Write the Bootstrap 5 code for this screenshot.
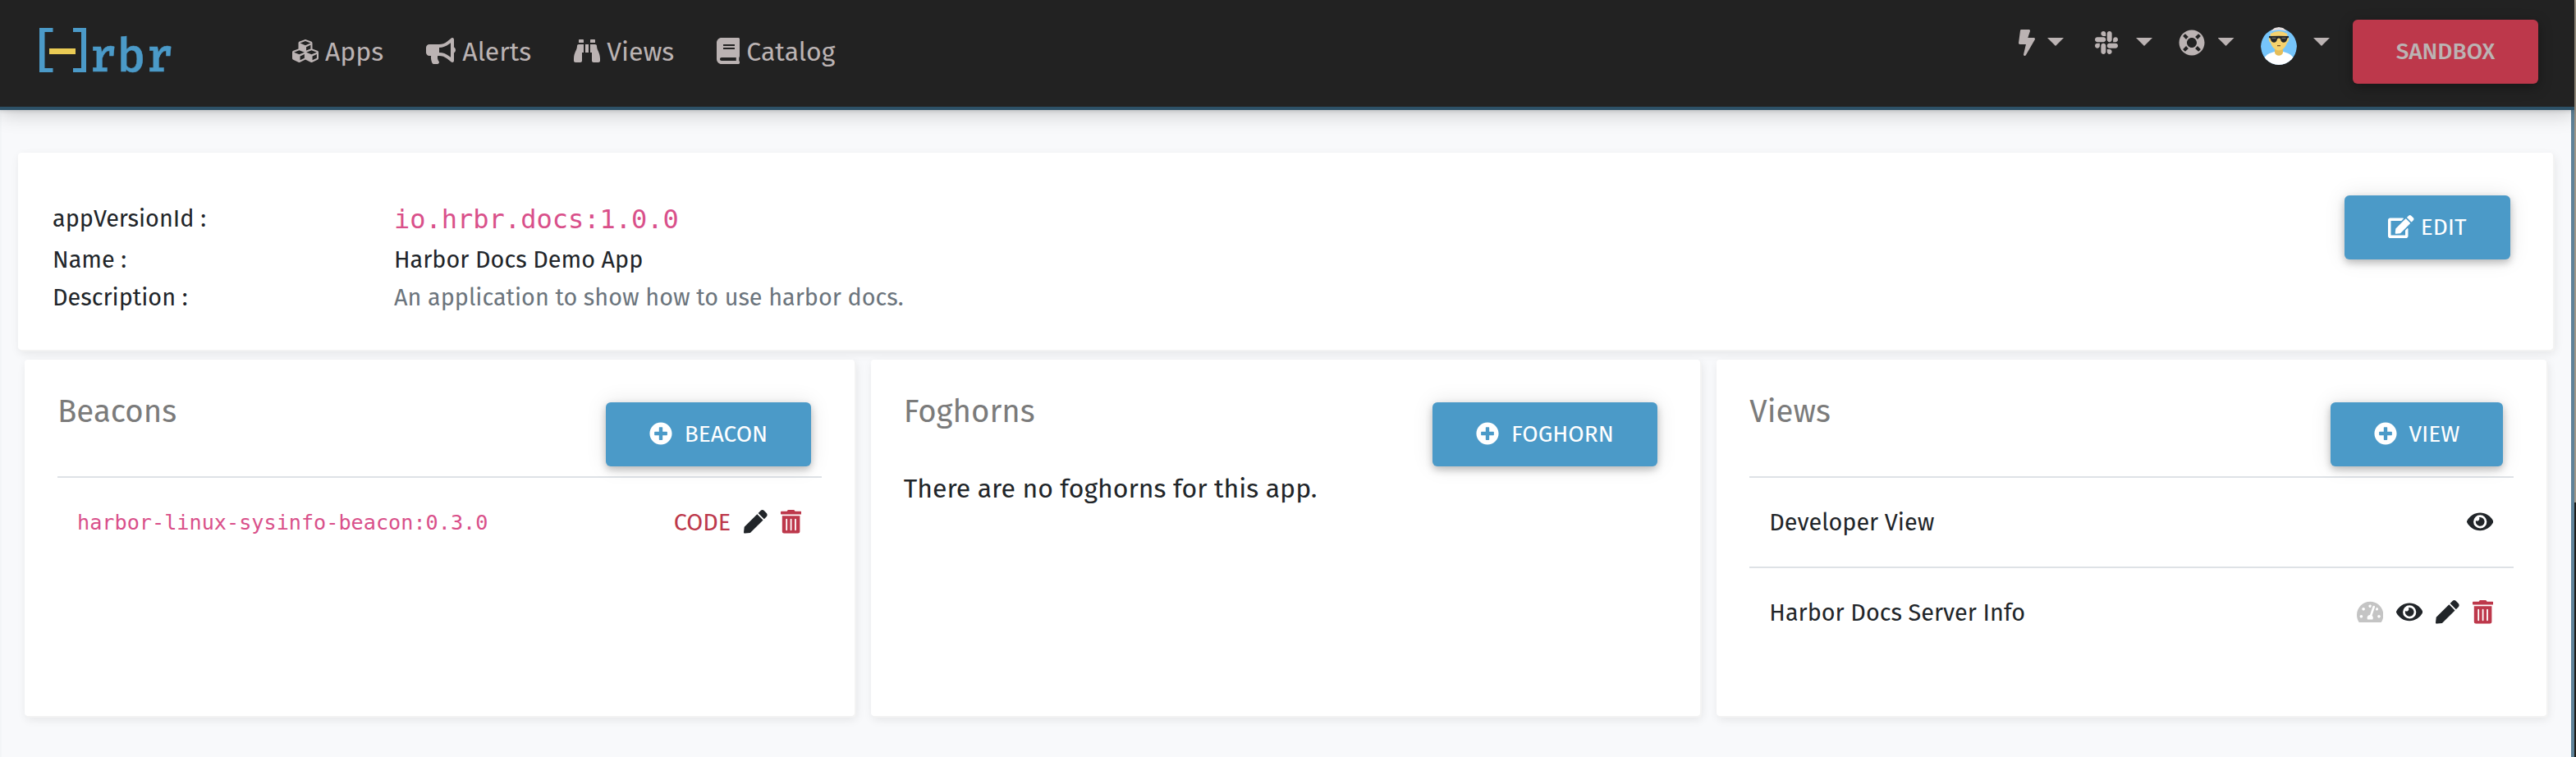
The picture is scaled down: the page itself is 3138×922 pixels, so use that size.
<!DOCTYPE html>
<html lang="en">
<head>
<meta charset="utf-8">
<title>Harbor Docs Demo App</title>
<link href="https://cdn.jsdelivr.net/npm/bootstrap@5.3.0/dist/css/bootstrap.min.css" rel="stylesheet">
<style>
  html { background: linear-gradient(#a09788 0, #a09788 612px, #1d1c18 612px) no-repeat; }
  body { background: transparent; font-family: "Fira Sans", "Noto Sans", "Liberation Sans", sans-serif; font-size: 28.8px; color: #212529; overflow: hidden; }
  svg { display: block; flex: none; fill: currentColor; }
  .shell { width: calc(100% - 2px); height: 922px; background: #f8f9fb; }
  .topbar { height: 134px; background: #222; border-bottom: 4px solid #2d5167; box-shadow: 0 4px 24px rgba(0,0,0,.2), 0 2px 4px rgba(0,0,0,.1); position: relative; z-index: 2; color: #bbb3b3; }
  .brand-logo { margin: 24px 0 0 40px; }
  .brand-logo text { font: 500 57.5px "Fira Mono", "Liberation Mono", monospace; fill: #4b9ac8; stroke: #4b9ac8; stroke-width: .5; }
  .menu { margin: 39px 0 0 126px; gap: 52px; font-size: 32px; line-height: 48px; }
  .menu a { color: inherit; text-decoration: none; display: flex; gap: 8px; }
  .menu svg { height: 32px; margin-top: 7px; }
  .tools svg { margin-top: 36px; }
  .tools .avatar { margin-top: 33px; }
  .drop { width: 20px; height: 10px; margin-top: 46px; background: #bbb3b3; clip-path: polygon(0 0, 100% 0, 50% 100%); }
  .big-btn { --bs-btn-border-width: 0; height: 78px; padding: 0 53.5px; font-size: 28px; line-height: 78px; color: #fff; background: #4b9ac8; border-radius: 6px; display: flex; align-items: center; box-shadow: 0 4px 10px rgba(0,0,0,.24), 0 0 26px rgba(0,0,0,.1); white-space: nowrap; }
  .big-btn svg { height: 28px; margin-top: -3px; }
  .big-btn.sandbox { width: 226px; padding: 0; justify-content: center; background: #bd384b; color: #bbb3b3; font-weight: 500; margin: 24px 44px 0 28px; box-shadow: 0 4px 16px rgba(0,0,0,.35); }
  .page { height: 788px; border-right: 4px solid #5f8399; border-left: 2px solid #f3f5f7; padding: 52px 22px 0 20px; }
  .panel { background: #fff; border-radius: 4px; box-shadow: 2px 2px 0 #f3f3f3, 2px 4px 12px rgba(0,0,0,.09); }
  .summary { height: 240px; padding: 58px 52px 0 42px; line-height: 46px; }
  .summary dl { display: grid; grid-template-columns: 416px auto; grid-template-rows: 50px 46px 46px; }
  .summary dt, .summary dd { font-weight: 400; margin: 0; }
  .summary .big-btn { margin-top: -6px; }
  .appid, .pkg { font-family: "DejaVu Sans Mono", monospace; color: #d9508a; }
  .appid { font-size: 32px; }
  .pkg { font-size: 25.2px; }
  .desc { color: #6c757d; }
  .columns { --bs-gutter-x: 20px; margin: 12px -2px 0; }
  .columns > .col-4 > .panel { height: 434px; padding: 40px 40px 0; }
  .head { height: 93px; }
  .head h2 { font-size: 38.4px; line-height: 46px; font-weight: 400; color: #7b7b7b; margin: 0; }
  .head .big-btn { margin: 12px 12.5px 0 0; padding: 0 53px; gap: 15px; }
  .empty { font-size: 32px; line-height: 48px; }
  .rows { margin-top: 9px; }
  .rows > div { height: 110px; border-top: 2px solid #dee2e6; padding: 2px 24.5px 0 24px; gap: 16px; }
  .rows svg { height: 28.8px; margin-top: -3px; }
  .red { color: #bd384b; }
  .faded { color: #c4c4c4; }
</style>
</head>
<body>
<svg width="0" height="0" style="position:absolute">
  <symbol id="plus" viewBox="0 0 512 512"><path d="M256 8C119 8 8 119 8 256s111 248 248 248 248-111 248-248S393 8 256 8zm144 276c0 6.6-5.4 12-12 12h-92v92c0 6.6-5.4 12-12 12h-56c-6.6 0-12-5.4-12-12v-92h-92c-6.6 0-12-5.4-12-12v-56c0-6.6 5.4-12 12-12h92v-92c0-6.6 5.4-12 12-12h56c6.6 0 12 5.4 12 12v92h92c6.6 0 12 5.4 12 12v56z"/></symbol>
  <symbol id="eye" viewBox="0 0 576 512"><path d="M572.52 241.4C518.29 135.59 410.93 64 288 64S57.68 135.64 3.48 241.41a32.35 32.35 0 0 0 0 29.19C57.71 376.41 165.07 448 288 448s230.32-71.64 284.52-177.41a32.35 32.35 0 0 0 0-29.19zM288 400a144 144 0 1 1 144-144 143.93 143.93 0 0 1-144 144zm0-240a95.31 95.31 0 0 0-25.31 3.79 47.85 47.85 0 0 1-66.9 66.9A95.78 95.78 0 1 0 288 160z"/></symbol>
  <symbol id="pen" viewBox="0 0 512 512"><path d="M290.74 93.24l128.02 128.02-277.99 277.99-114.14 12.6C11.35 513.54-1.56 500.62.14 485.34l12.7-114.22 277.9-277.88zm207.2-19.06l-60.11-60.11c-18.75-18.75-49.16-18.75-67.91 0l-56.55 56.55 128.02 128.02 56.55-56.55c18.75-18.76 18.75-49.16 0-67.91z"/></symbol>
  <symbol id="trash" viewBox="0 0 448 512"><path d="M32 464a48 48 0 0 0 48 48h288a48 48 0 0 0 48-48V128H32zm272-256a16 16 0 0 1 32 0v224a16 16 0 0 1-32 0zm-96 0a16 16 0 0 1 32 0v224a16 16 0 0 1-32 0zm-96 0a16 16 0 0 1 32 0v224a16 16 0 0 1-32 0zM432 32H312l-9.4-18.7A24 24 0 0 0 281.1 0H166.8a23.72 23.72 0 0 0-21.4 13.3L136 32H16A16 16 0 0 0 0 48v32a16 16 0 0 0 16 16h416a16 16 0 0 0 16-16V48a16 16 0 0 0-16-16z"/></symbol>
</svg>
<div class="shell">
  <nav class="topbar d-flex align-items-start">
    <svg class="brand-logo" width="190" height="90" viewBox="0 0 190 90">
      <path d="M8 10H24.500V15H14.500V59H24.500V64H8zM49 10H65V64H49V59H59V15H49z" fill="#4b9ac8"/>
      <rect x="20" y="35" width="32" height="7" fill="#eacb54"/>
      <text x="68" y="63">rbr</text>
    </svg>
    <div class="menu d-flex">
      <a href="#"><svg viewBox="0 0 512 512" width="32"><path d="M488.600 250.200L392 214V105.500c0-15-9.300-28.400-23.400-33.700l-100-37.500c-8.100-3.100-17.100-3.100-25.300 0l-100 37.500c-14.100 5.300-23.400 18.700-23.400 33.700V214l-96.600 36.200C9.300 255.500 0 268.900 0 283.900V394c0 13.600 7.700 26.100 19.900 32.200l100 50c10.100 5.100 22.100 5.100 32.200 0l103.900-52 103.900 52c10.100 5.100 22.100 5.100 32.200 0l100-50c12.200-6.100 19.900-18.600 19.900-32.200V283.900c0-15-9.300-28.400-23.400-33.700zM358 214.800l-85 31.900v-68.200l85-37v73.300zM154 104.100l102-38.200 102 38.200v.6l-102 41.400-102-41.400v-.6zm84 291.100l-85 42.500v-79.100l85-38.800v75.400zm0-112l-102 41.400-102-41.400v-.6l102-38.200 102 38.200v.6zm240 112l-85 42.500v-79.100l85-38.800v75.400zm0-112l-102 41.400-102-41.400v-.6l102-38.200 102 38.200v.6z"/></svg>Apps</a>
      <a href="#"><svg viewBox="0 0 576 512" width="36"><path d="M576 240c0-23.630-12.950-44.040-32-55.120V32.010C544 23.260 537.020 0 512 0c-7.120 0-14.190 2.380-19.980 7.020l-85.030 68.030C364.280 109.190 310.660 128 256 128H64c-35.350 0-64 28.650-64 64v96c0 35.350 28.650 64 64 64h33.700c-1.390 10.480-2.180 21.140-2.180 32 0 39.770 9.260 77.350 25.560 110.940 5.190 10.690 16.520 17.060 28.400 17.060h74.280c26.050 0 41.690-29.840 25.900-50.560-16.400-21.520-26.150-48.360-26.150-77.440 0-11.110 1.620-21.790 4.410-32H256c54.660 0 108.280 18.810 150.980 52.950l85.030 68.030a32.023 32.023 0 0 0 19.980 7.020c24.920 0 32-22.780 32-32V295.130C563.050 284.040 576 263.630 576 240zm-96 141.420l-33.050-26.440C392.950 311.780 325.120 288 256 288v-96c69.120 0 136.950-23.780 190.950-66.980L480 98.580v282.840z"/></svg>Alerts</a>
      <a href="#"><svg viewBox="0 0 512 512" width="32"><path d="M416 48c0-8.840-7.160-16-16-16h-64c-8.840 0-16 7.160-16 16v48h96V48zM63.910 159.990C61.400 253.840 3.460 274.220 0 404v44c0 17.670 14.330 32 32 32h96c17.670 0 32-14.330 32-32V288h32V128H95.840c-17.630 0-31.450 14.370-31.930 31.990zm384.180 0c-.48-17.620-14.300-31.990-31.930-31.990H320v160h32v160c0 17.670 14.330 32 32 32h96c17.670 0 32-14.330 32-32v-44c-3.460-129.780-61.400-150.160-63.910-244.010zM176 32h-64c-8.840 0-16 7.160-16 16v48h96V48c0-8.840-7.160-16-16-16zm48 256h64V128h-64v160z"/></svg>Views</a>
      <a href="#"><svg viewBox="0 0 448 512" width="28"><path d="M448 360V24c0-13.300-10.700-24-24-24H96C43 0 0 43 0 96v320c0 53 43 96 96 96h328c13.300 0 24-10.700 24-24v-16c0-7.500-3.500-14.300-8.900-18.700-4.200-15.400-4.200-59.300 0-74.700 5.400-4.300 8.900-11.100 8.900-18.600zM128 134c0-3.300 2.700-6 6-6h212c3.300 0 6 2.700 6 6v20c0 3.300-2.700 6-6 6H134c-3.300 0-6-2.700-6-6v-20zm0 64c0-3.300 2.700-6 6-6h212c3.300 0 6 2.700 6 6v20c0 3.300-2.700 6-6 6H134c-3.300 0-6-2.700-6-6v-20zm253.400 250H96c-17.700 0-32-14.300-32-32 0-17.600 14.400-32 32-32h285.400c-1.900 17.100-1.900 46.900 0 64z"/></svg>Catalog</a>
    </div>
    <div class="tools d-flex align-items-start ms-auto">
      <svg viewBox="0 0 320 512" width="20" height="32"><path d="M296 160H180.600l42.600-129.800C227.200 15 215.700 0 200 0H56C44 0 33.800 8.900 32.200 20.800l-32 240C-1.700 275.200 9.500 288 24 288h118.700L96.600 482.500c-3.600 15.200 8 29.500 23.300 29.500 8.400 0 16.400-4.400 20.800-12l176-304c9.300-15.900-2.200-36-20.700-36z"/></svg>
      <span class="drop" style="margin-left:15px"></span>
      <svg style="margin-left:38px" viewBox="0 0 448 512" width="28" height="32"><path d="M94.120 315.100c0 25.900-21.160 47.060-47.060 47.060S0 341 0 315.100c0-25.900 21.160-47.060 47.060-47.060h47.060v47.060zm23.720 0c0-25.900 21.160-47.060 47.060-47.060s47.060 21.160 47.060 47.060v117.840c0 25.900-21.160 47.060-47.060 47.060s-47.060-21.160-47.060-47.060V315.100zm47.060-188.980c-25.900 0-47.060-21.160-47.060-47.060S139 32 164.900 32s47.060 21.160 47.060 47.060v47.060H164.900zm0 23.720c25.900 0 47.060 21.160 47.060 47.060s-21.160 47.060-47.060 47.060H47.060C21.160 243.960 0 222.800 0 196.900s21.160-47.060 47.060-47.060H164.900zm188.980 47.060c0-25.900 21.160-47.060 47.060-47.060 25.900 0 47.060 21.160 47.060 47.060s-21.160 47.060-47.060 47.060h-47.060V196.900zm-23.720 0c0 25.900-21.160 47.060-47.060 47.060-25.900 0-47.060-21.160-47.060-47.060V79.060c0-25.900 21.160-47.060 47.060-47.060 25.900 0 47.060 21.160 47.060 47.060V196.900zM283.100 385.880c25.900 0 47.060 21.160 47.060 47.060 0 25.900-21.160 47.060-47.060 47.060-25.900 0-47.060-21.160-47.060-47.060v-47.060h47.060zm0-23.720c-25.900 0-47.060-21.160-47.060-47.060 0-25.900 21.160-47.060 47.060-47.060h117.840c25.900 0 47.060 21.160 47.060 47.060 0 25.900-21.160 47.060-47.060 47.060H283.100z"/></svg>
      <span class="drop" style="margin-left:22px"></span>
      <svg style="margin-left:31.500px" viewBox="0 0 512 512" width="32" height="32"><path d="M256 8C119.033 8 8 119.033 8 256s111.033 248 248 248 248-111.033 248-248S392.967 8 256 8zm173.696 119.559l-63.399 63.399c-10.987-18.559-26.670-34.252-45.255-45.255l63.399-63.399a218.396 218.396 0 0 1 45.255 45.255zM256 352c-53.019 0-96-42.981-96-96s42.981-96 96-96 96 42.981 96 96-42.981 96-96 96zM127.559 82.304l63.399 63.399c-18.559 10.987-34.252 26.670-45.255 45.255l-63.399-63.399a218.372 218.372 0 0 1 45.255-45.255zM82.304 384.441l63.399-63.399c10.987 18.559 26.670 34.252 45.255 45.255l-63.399 63.399a218.396 218.396 0 0 1-45.255-45.255zm302.137 45.255l-63.399-63.399c18.559-10.987 34.252-26.670 45.255-45.255l63.399 63.399a218.403 218.403 0 0 1-45.255 45.255z"/></svg>
      <span class="drop" style="margin-left:16px"></span>
      <svg class="avatar" style="margin-left:32.500px" width="44" height="46" viewBox="0 0 44 46">
        <clipPath id="face"><ellipse cx="22" cy="23" rx="22" ry="23"/></clipPath>
        <g clip-path="url(#face)">
          <ellipse cx="22" cy="24" rx="22" ry="22.500" fill="#76c5fa"/>
          <path d="M3 46V41C4 34 12 31 17 30H27C32 31 40 34 41 41V46z" fill="#fff"/>
          <path d="M17 25H27V31C26 36 18 36 17 31z" fill="#e6bd58"/>
          <path d="M12 8Q22 2 32 8L32.500 12Q35 12 34 16Q33.500 19 32 19C31 24 26 28.500 22 28.500S13 24 12 19Q10.500 19 10 16Q9 12 11.500 12z" fill="#f5d26e"/>
          <path d="M11 10C12 3 17 0 22 0S32 3 33 10L31 5Q22 2 13 5z" fill="#e4dddd"/>
          <path d="M10 11Q22 10.500 34 11V13Q32 13 32 15C31 20 24.500 20 24 14.500Q22 12.500 20 14.500C19.500 20 13 20 12 15Q12 13 10 13z" fill="#23262a"/>
          <path d="M13.500 13.500H18.500M25.500 13.500H30.500" stroke="#6e6b55" stroke-width="1.500"/>
          <path d="M20 22.700H24" stroke="#6b4a22" stroke-width="1.300"/>
        </g>
      </svg>
      <span class="drop" style="margin-left:20px"></span>
      <button class="btn big-btn sandbox">SANDBOX</button>
    </div>
  </nav>
  <main class="page">
    <section class="panel summary d-flex align-items-start justify-content-between">
      <dl class="mb-0">
        <dt>appVersionId :</dt><dd class="appid">io.hrbr.docs:1.0.0</dd>
        <dt>Name :</dt><dd>Harbor Docs Demo App</dd>
        <dt>Description :</dt><dd class="desc">An application to show how to use harbor docs.</dd>
      </dl>
      <button class="btn big-btn"><svg class="me-2" viewBox="0 0 576 512" width="31.500"><path d="M402.600 83.200l90.200 90.200c3.800 3.800 3.800 10 0 13.800L274.400 405.600l-92.800 10.300c-12.400 1.400-22.900-9.100-21.500-21.500l10.300-92.800L388.800 83.200c3.800-3.800 10-3.800 13.800 0zm162-22.900l-48.800-48.800c-15.200-15.200-39.900-15.200-55.200 0l-35.400 35.400c-3.800 3.800-3.800 10 0 13.800l90.200 90.200c3.800 3.800 10 3.800 13.800 0l35.400-35.400c15.200-15.300 15.200-40 0-55.200zM384 346.200V448H64V128h229.800c3.200 0 6.200-1.300 8.500-3.500l40-40c7.600-7.600 2.200-20.500-8.500-20.500H48C21.500 64 0 85.500 0 112v352c0 26.500 21.500 48 48 48h352c26.500 0 48-21.500 48-48V306.200c0-10.700-12.900-16-20.500-8.500l-40 40c-2.200 2.300-3.500 5.300-3.500 8.500z"/></svg>EDIT</button>
    </section>
    <div class="row columns">
      <div class="col-4">
        <section class="panel">
          <div class="head d-flex justify-content-between align-items-start"><h2>Beacons</h2><button class="btn big-btn"><svg width="28"><use href="#plus"/></svg>BEACON</button></div>
          <div class="rows">
            <div class="d-flex align-items-center"><span class="pkg me-auto">harbor-linux-sysinfo-beacon:0.3.0</span><span class="red">CODE</span><svg width="28.800"><use href="#pen"/></svg><svg class="red" width="25.200"><use href="#trash"/></svg></div>
          </div>
        </section>
      </div>
      <div class="col-4">
        <section class="panel">
          <div class="head d-flex justify-content-between align-items-start"><h2>Foghorns</h2><button class="btn big-btn"><svg width="28"><use href="#plus"/></svg>FOGHORN</button></div>
          <div class="empty">There are no foghorns for this app.</div>
        </section>
      </div>
      <div class="col-4">
        <section class="panel">
          <div class="head d-flex justify-content-between align-items-start"><h2>Views</h2><button class="btn big-btn"><svg width="28"><use href="#plus"/></svg>VIEW</button></div>
          <div class="rows">
            <div class="d-flex align-items-center"><span class="me-auto">Developer View</span><svg width="32.400"><use href="#eye"/></svg></div>
            <div class="d-flex align-items-center"><span class="me-auto">Harbor Docs Server Info</span><svg class="faded" width="32.400" viewBox="0 0 576 512"><path d="M288 32C128.940 32 0 160.940 0 320c0 52.800 14.250 102.260 39.060 144.800 5.610 9.620 16.300 15.200 27.440 15.200h443c11.140 0 21.830-5.580 27.440-15.200C561.750 422.260 576 372.800 576 320c0-159.060-128.940-288-288-288zm0 64c14.710 0 26.580 10.130 30.320 23.650-1.110 2.260-2.640 4.230-3.450 6.670l-9.220 27.670c-5.130 3.490-10.970 6.010-17.640 6.010-17.670 0-32-14.330-32-32S270.330 96 288 96zM96 384c-17.670 0-32-14.330-32-32s14.330-32 32-32 32 14.330 32 32-14.330 32-32 32zm48-160c-17.670 0-32-14.330-32-32s14.330-32 32-32 32 14.330 32 32-14.330 32-32 32zm246.770-72.410l-61.330 184C343.130 347.330 352 364.540 352 384c0 11.720-3.380 22.550-8.880 32H232.880c-5.500-9.450-8.880-20.280-8.880-32 0-33.940 26.500-61.430 59.900-63.590l61.340-184.010c4.170-12.560 17.730-19.450 30.360-15.170 12.570 4.190 19.350 17.790 15.170 30.360zm14.660 57.200l15.520-46.550c3.470-1.290 7.130-2.230 11.050-2.230 17.670 0 32 14.330 32 32s-14.330 32-32 32c-11.380-.01-20.890-6.280-26.570-15.220zM480 384c-17.670 0-32-14.330-32-32s14.330-32 32-32 32 14.330 32 32-14.330 32-32 32z"/></svg><svg width="32.400"><use href="#eye"/></svg><svg width="28.800"><use href="#pen"/></svg><svg class="red" width="25.200"><use href="#trash"/></svg></div>
          </div>
        </section>
      </div>
    </div>
  </main>
</div>
<script src="https://cdn.jsdelivr.net/npm/bootstrap@5.3.0/dist/js/bootstrap.bundle.min.js"></script>
</body>
</html>
